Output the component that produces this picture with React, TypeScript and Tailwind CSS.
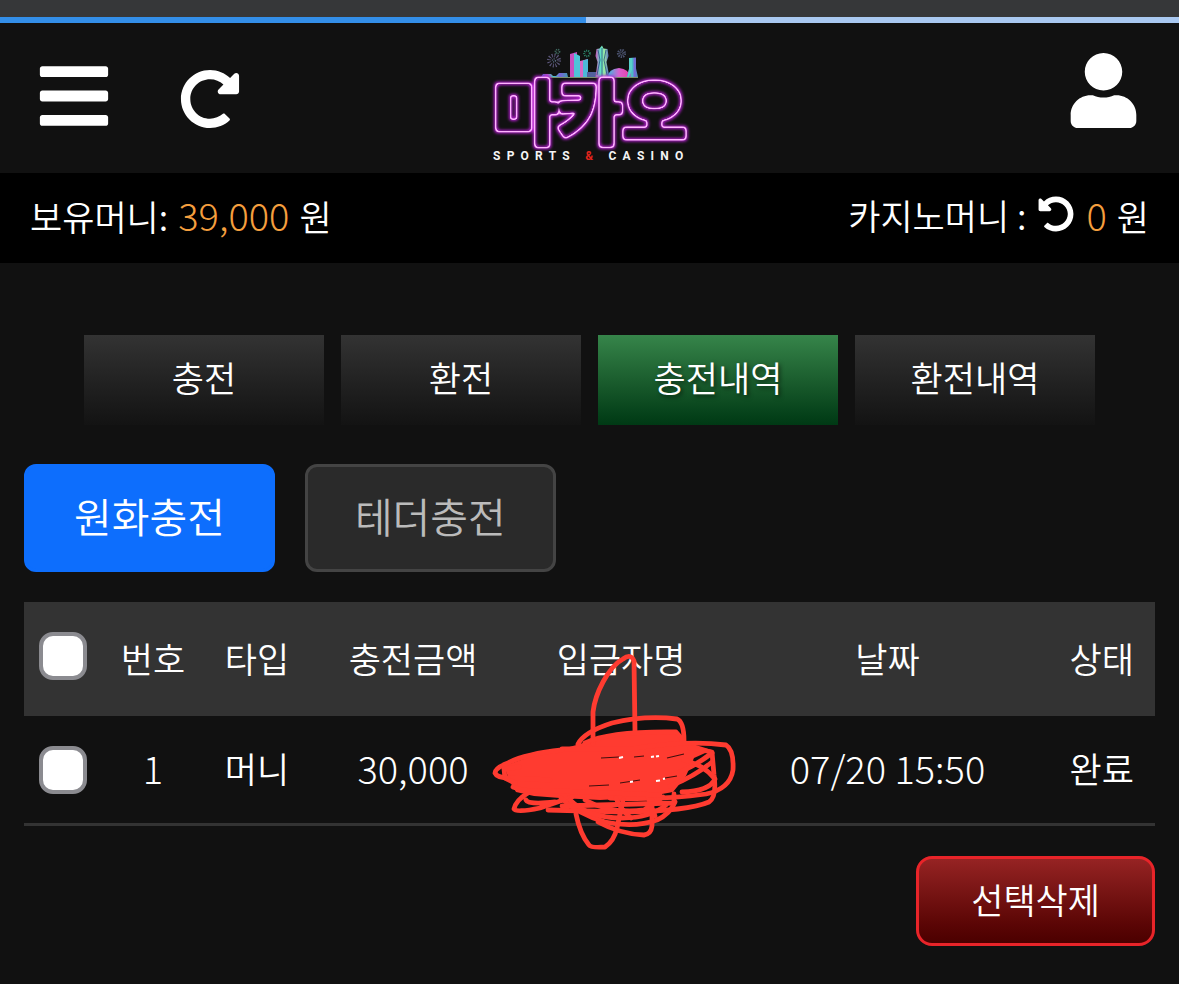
import { useState } from "react";
import { FaBars, FaRedoAlt, FaUndoAlt, FaUser } from "react-icons/fa";

function Logo() {
  return (
    <svg viewBox="0 0 220 136" className="h-[136px] w-[220px]" role="img" aria-label="마카오 SPORTS & CASINO">
      <defs>
        <linearGradient id="city" x1="0" x2="1" y1="0" y2="0">
          <stop offset="0" stopColor="#2b6fd0" />
          <stop offset=".22" stopColor="#b44cc4" />
          <stop offset=".45" stopColor="#3fd0c4" />
          <stop offset=".7" stopColor="#7a62d8" />
          <stop offset="1" stopColor="#3f9ab0" />
        </linearGradient>
        <linearGradient id="dome" x1="0" x2="1" y1="0" y2="0">
          <stop offset="0" stopColor="#38bde0" />
          <stop offset=".5" stopColor="#d95fd0" />
          <stop offset="1" stopColor="#e83fa8" />
        </linearGradient>
        <linearGradient id="tower" x1="0" x2="1" y1="0" y2="0">
          <stop offset="0" stopColor="#c953b8" />
          <stop offset=".35" stopColor="#5fe0c8" />
          <stop offset=".65" stopColor="#9be8a0" />
          <stop offset="1" stopColor="#4a4fd0" />
        </linearGradient>
        {/* turns solid lettering into a rounded neon tube with a halo on both sides */}
        <filter id="neon" x="-10%" y="-20%" width="120%" height="140%" colorInterpolationFilters="sRGB">
          <feGaussianBlur in="SourceAlpha" stdDeviation="1.7" result="soft" />
          <feComponentTransfer in="soft" result="outer">
            <feFuncA type="linear" slope="7" intercept="-0.5" />
          </feComponentTransfer>
          <feComponentTransfer in="soft" result="inner">
            <feFuncA type="linear" slope="7" intercept="-2.6" />
          </feComponentTransfer>
          <feComposite in="outer" in2="inner" operator="out" result="ring" />
          <feFlood floodColor="#ffb4ff" />
          <feComposite in2="ring" operator="in" result="tube" />
          <feMorphology in="ring" operator="dilate" radius="1" result="wide" />
          <feGaussianBlur in="wide" stdDeviation="1.8" result="haze" />
          <feFlood floodColor="#b41ed0" />
          <feComposite in2="haze" operator="in" result="halo" />
          <feMerge>
            <feMergeNode in="halo" />
            <feMergeNode in="tube" />
          </feMerge>
        </filter>
      </defs>

      {/* fireworks */}
      <g fill="none" strokeLinecap="butt">
        <circle cx="74" cy="24.500" r="5" stroke="#5d587c" strokeWidth="4" strokeDasharray="1 1.600" />
        <circle cx="74" cy="24.500" r="1.500" stroke="#5a6a80" strokeWidth="1.500" strokeDasharray="1 1" />
        <circle cx="77.500" cy="15.500" r="2" stroke="#3f6a60" strokeWidth="1.800" strokeDasharray="1 .8" />
        <circle cx="107" cy="17.500" r="2.800" stroke="#2c8a6c" strokeWidth="2" strokeDasharray="1 1" />
        <circle cx="141.500" cy="17.500" r="2.600" stroke="#4c5470" strokeWidth="4" strokeDasharray="1 .8" />
      </g>

      {/* skyline */}
      <path d="M61 41l2-3h8l2 2h3l3-3h8l1 4z" fill="url(#city)" />
      <path d="M90 18l7-2v25h-7z" fill="#c94fc0" />
      <path d="M94 17l6 3v21h-6z" fill="#4fc4d8" />
      <path d="M100 25l8-2v18h-8z" fill="#d668c8" />
      <path d="M103 24.500l5-1.500v18h-5z" fill="#4cb8d8" />
      <path d="M107 36h10v5h-10z" fill="#52609c" />
      <path d="M122 9.500l1.500 3 4 .5 1 7-2 6 3 15h-14l2-15-2-6 1-7 3-.5z" fill="url(#tower)" />
      <path d="M118 14l2 10-3 15M126 14l-2 10 3 15M122 12v29" fill="none" stroke="#244c88" strokeWidth=".8" />
      <path d="M128 41q0-8 11-9 10 1 11 9z" fill="url(#dome)" />
      <path d="M147 41l2-8v-11l7-.5v11l2 8.500z" fill="url(#city)" />
      <path d="M149 22l3 0v12l-3 7h-2l2-8z" fill="#58d0c8" />
      <path d="M60 41.500h98" stroke="#7a8f6c" strokeWidth="1" />

      <text
        x="110"
        y="103"
        textAnchor="middle"
        filter="url(#neon)"
        stroke="#000"
        strokeWidth="2"
        strokeLinejoin="round"
        className="font-['Noto_Sans_CJK_KR',sans-serif] text-[70px] font-black"
      >
        마카오
      </text>
      <text
        x="13"
        y="124"
        fill="#f4f4f4"
        className="font-[Roboto,sans-serif] text-[12px] font-bold tracking-[0.52em]"
      >
        SPORTS <tspan fill="#e0241c">&amp;</tspan> CASINO
      </text>
    </svg>
  );
}

function Scribble() {
  return (
    <svg
      viewBox="0 0 270 220"
      className="pointer-events-none absolute top-1/2 left-1/2 h-[220px] w-[270px] -translate-x-[141px] -translate-y-[129px]"
      aria-hidden="true"
    >
      <path
        d="M24 126L52 116 82 109 100 104 125 95 160 91 197 94 206 102 232 110 214 118 206 136 193 152 160 158 120 160 80 158 54 156 36 152 30 142z"
        fill="#ff3b30"
      />
      <g fill="none" stroke="#ff3b30" strokeWidth="4.800" strokeLinecap="round" strokeLinejoin="round">
        <path d="M113 104V72C115 54 128 27 143 19Q151 13 154 21L155 92" />
        <path d="M98 104Q104 92 132 83Q165 75 197 79Q204 82 204 101" />
        <path d="M105 103Q130 91 196 92L202 99 203 104" />
        <path d="M82 109H150Q206 100 246 105Q254 110 253 130Q250 149 226 154Q185 160 130 158" />
        <path d="M82 110Q45 114 28 123Q15 128 15 133Q17 138 30 138L70 140" />
        <path d="M39 127L24 129 25 138 35 143" />
        <path d="M48 153Q36 160 34 169Q36 173 60 168L92 157M46 160Q48 165 75 162" />
        <path d="M68 170L145 172Q208 171 229 162Q237 157 234 135L232 112 210 108" />
        <path d="M232 113Q210 130 184 138M232 122Q214 137 190 146M204 120Q224 125 235 139Q230 151 202 152" />
        <path d="M81 158Q98 174 125 182Q155 188 177 180Q190 174 195 162" />
        <path d="M90 160Q108 178 142 178Q170 178 186 165M105 160Q130 174 164 170L183 157" />
        <path d="M96 174Q100 194 109 205Q111 208 125 207Q134 201 137 188L143 160" />
        <path d="M136 158Q140 169 151 178M118 182Q140 194 164 195Q171 194 172 186V160M168 157Q172 168 175 176" />
        <path d="M33 147Q48 153 78 151L180 155M82 166L194 163 194 154" />
      </g>
      <path d="M121 118l18-1M154 117l10-1M187 118l17-4M109 146l20-1M140 143l20-3M185 138l12-2" fill="none" stroke="#43100e" strokeWidth="1.200" />
      <path d="M139 118l4-1M171 117l3-.5M176 116.500l3-.5M150 142l3-.5M176 141l4-.5M183 139l2-.5" fill="none" stroke="#fff" strokeWidth="2" />
    </svg>
  );
}

const tabs = ["충전", "환전", "충전내역", "환전내역"];
const headings = ["번호", "타입", "충전금액", "입금자명", "날짜", "상태"];
const checkbox =
  "block size-12 mx-auto appearance-none rounded-[14px] border-4 border-[#8b8b90] bg-white checked:bg-[#0d6efd]";

export default function App() {
  const [active, setActive] = useState("충전내역");

  return (
    <div className="min-h-screen bg-[#111] font-['Noto_Sans_CJK_KR',sans-serif] text-[35px] leading-[50px] font-[350] text-white">
      <div className="h-[17px] bg-[#363739]" />
      <div className="h-1.5 bg-[#a9c8f0]">
        <div className="h-full w-[49.7%] bg-[#338ee8]" />
      </div>

      <header className="grid h-[150px] grid-cols-[1fr_auto_1fr] items-center">
        <div className="flex items-center gap-[67px] pb-1 pl-[35px]">
          <button type="button" aria-label="메뉴">
            <FaBars className="size-[78px]" />
          </button>
          <button type="button" aria-label="새로고침" className="pt-1.5">
            <FaRedoAlt className="size-[60px]" />
          </button>
        </div>
        <a href="#home" className="pt-3">
          <Logo />
        </a>
        <div className="flex justify-end pr-[38px] pb-4">
          <button type="button" aria-label="내 정보">
            <FaUser className="size-[75px]" />
          </button>
        </div>
      </header>

      <section className="flex h-[90px] items-center justify-between bg-black pr-[30px] pb-1.5 pl-[30px]">
        <p className="flex items-baseline gap-2.5">
          보유머니: <span className="text-[38px] font-light text-[#f59f3e]">39,000</span> 원
        </p>
        <p className="flex items-center gap-3">
          카지노머니 :
          <button type="button" aria-label="카지노머니 새로고침" className="pb-0.5">
            <FaUndoAlt className="size-9" />
          </button>
          <span className="flex items-baseline gap-2.5">
            <span className="text-[38px] font-light text-[#f59f3e]">0</span> 원
          </span>
        </p>
      </section>

      <main className="px-6 pt-[72px]">
        <nav className="grid grid-cols-4 gap-[17px] px-[60px]">
          {tabs.map((tab) => (
            <button
              key={tab}
              type="button"
              onClick={() => setActive(tab)}
              className={
                tab === active
                  ? "h-[90px] bg-linear-to-b from-[#36854a] to-[#003914] pb-1.5 text-shadow-[2px_2px_4px_#0008]"
                  : "h-[90px] bg-linear-to-b from-[#333] to-[#131313] pb-1.5"
              }
            >
              {tab}
            </button>
          ))}
        </nav>

        <div className="mt-[39px] flex gap-[30px] text-[41px]">
          <button type="button" className="h-[108px] rounded-xl border-3 border-[#0d6efd] bg-[#0d6efd] px-[47px] pb-1.5">
            원화충전
          </button>
          <button type="button" className="h-[108px] rounded-xl border-3 border-[#444] bg-[#2a2a2a] px-[47px] pb-1.5 text-[#bbb]">
            테더충전
          </button>
        </div>

        <table className="mt-[30px] w-full table-fixed border-collapse text-center">
          <colgroup>
            <col className="w-[6.9%]" />
            <col className="w-[9%]" />
            <col className="w-[9.4%]" />
            <col className="w-[18.2%]" />
            <col className="w-[18.6%]" />
            <col className="w-[28.5%]" />
            <col className="w-[9.4%]" />
          </colgroup>
          <thead>
            <tr className="h-[114px] bg-[#333]">
              <th className="pt-[30px] align-top">
                <input type="checkbox" aria-label="전체 선택" className={checkbox} />
              </th>
              {headings.map((heading) => (
                <th key={heading} className="pb-0.5 font-[350] whitespace-nowrap">
                  {heading}
                </th>
              ))}
            </tr>
          </thead>
          <tbody>
            <tr className="h-[108px] border-b-3 border-[#333]">
              <td className="pt-[30px] align-top">
                <input type="checkbox" aria-label="1번 선택" className={checkbox} />
              </td>
              <td className="pb-0.5 text-[38px] font-light">1</td>
              <td className="pb-0.5">머니</td>
              <td className="pb-0.5 text-[38px] font-light">30,000</td>
              <td className="relative">
                <Scribble />
              </td>
              <td className="pb-0.5 text-[38px] font-light whitespace-nowrap">07/20 15:50</td>
              <td className="pb-0.5">완료</td>
            </tr>
          </tbody>
        </table>

        <div className="mt-[30px] flex justify-end pb-9">
          <button
            type="button"
            className="h-[90px] rounded-2xl border-3 border-[#e92429] bg-linear-to-b from-[#962323] to-[#4b0000] px-[52px] pb-1"
          >
            선택삭제
          </button>
        </div>
      </main>
    </div>
  );
}
